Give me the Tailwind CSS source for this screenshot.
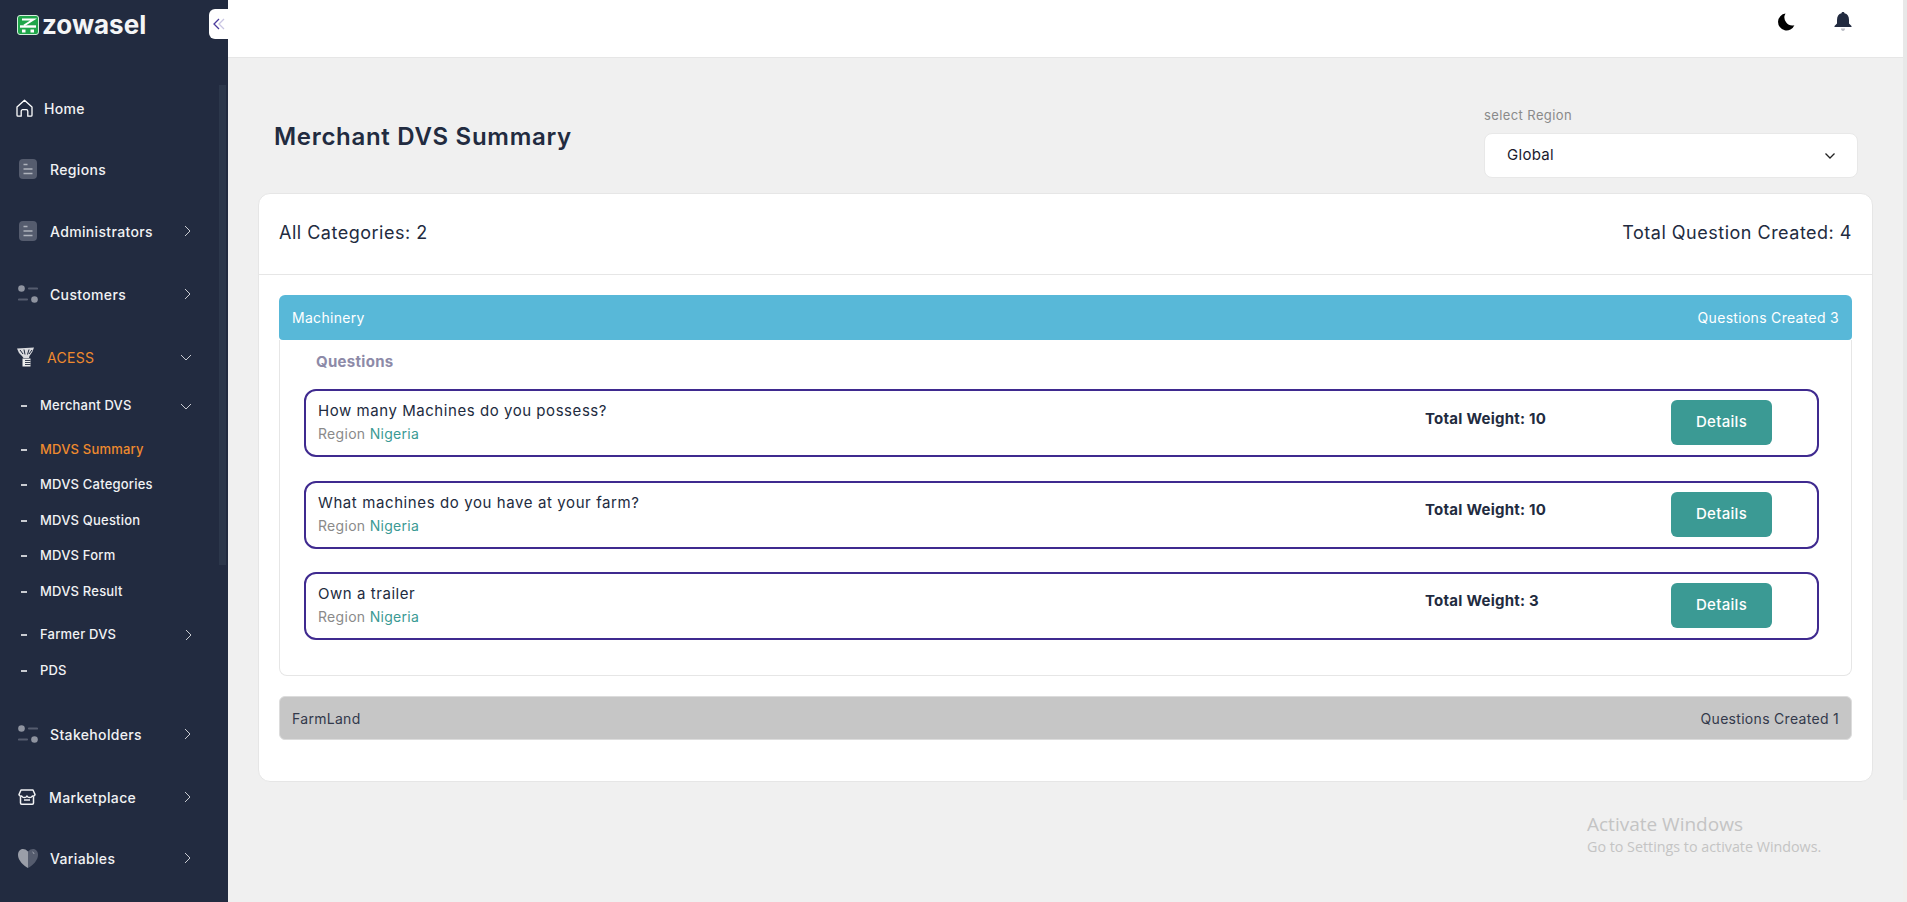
<!DOCTYPE html>
<html lang="en">

<head>
    <meta charset="UTF-8">
    <meta name="viewport" content="width=device-width, initial-scale=1.0">
    <title>Merchant DVS Summary</title>
    <script src="https://cdn.jsdelivr.net/npm/@tailwindcss/browser@4"></script>
</head>

<body class="h-[902px] overflow-hidden flex bg-[#f0f0f0] text-[#222b40] font-[Inter,sans-serif]">

    <!-- Sidebar -->
    <aside class="relative w-[228px] h-[902px] shrink-0 bg-[#222b40] text-[#f1f2f4] overflow-hidden">
        <div class="flex items-center h-[50px] pl-[17px]">
            <svg class="w-[22px] h-[20px]" viewBox="0 0 22 20">
                <rect x=".5" y=".5" width="21" height="19" rx="2.500" fill="#1fa64a" stroke="#d5eedd" />
                <path d="M5 4.500h11.500L7 10.500" fill="none" stroke="#fff" stroke-width="2" />
                <path d="M3 11.500h16" stroke="#fff" stroke-width="2.400" />
                <rect x="5" y="14.500" width="3.500" height="3" fill="#fff" />
                <rect x="13.500" y="14.500" width="3.500" height="3" fill="#fff" />
            </svg>
            <span class="ml-[3px] text-[26px] leading-none font-bold text-[#f4f5f6]">zowasel</span>
        </div>

        <button class="absolute left-[209px] top-[9px] w-[19px] h-[30px] bg-white rounded-l-md flex items-center justify-center">
            <svg class="w-[14px] h-[14px]" viewBox="0 0 14 14" fill="none" stroke-width="1.300">
                <path d="M7 2 2 7l5 5" stroke="#4a3a9c" />
                <path d="M12 2 7 7l5 5" stroke="#c9c5e3" />
            </svg>
        </button>

        <div class="absolute left-[219px] top-[85px] w-[7px] h-[480px] bg-[#2c374b]"></div>

        <nav class="relative pt-[42px] text-[14px] font-medium">
            <a class="flex items-center h-8 pl-[16px]">
                <svg class="w-[17px] h-[18px] shrink-0" viewBox="0 0 17 18" fill="none" stroke="#fff" stroke-width="1.300" stroke-linejoin="round">
                    <path d="M1 8 8.500 1.200 16 8v8.200a1 1 0 0 1-1 1h-3.200v-5a1.500 1.500 0 0 0-1.500-1.500H6.700a1.500 1.500 0 0 0-1.500 1.500v5H2a1 1 0 0 1-1-1z" />
                </svg>
                <span class="ml-[11px] tracking-[0.3px]">Home</span>
            </a>

            <a class="flex items-center h-8 pl-[19px] mt-[29px]">
                <svg class="w-[18px] h-[20px] shrink-0" viewBox="0 0 18 20">
                    <rect width="18" height="20" rx="4" fill="#555c6e" />
                    <path d="M4.500 5.500h4M4.500 10h9M4.500 14.500h9" stroke="#aeb2bc" stroke-width="1.300" />
                </svg>
                <span class="ml-[13px] tracking-[0.35px]">Regions</span>
            </a>

            <a class="flex items-center h-8 pl-[19px] mt-[30px]">
                <svg class="w-[18px] h-[20px] shrink-0" viewBox="0 0 18 20">
                    <rect width="18" height="20" rx="4" fill="#555c6e" />
                    <path d="M4.500 5.500h4M4.500 10h9M4.500 14.500h9" stroke="#aeb2bc" stroke-width="1.300" />
                </svg>
                <span class="ml-[13px] tracking-[0.35px]">Administrators</span>
                <svg class="absolute left-[184px] w-[7px] h-[12px]" viewBox="0 0 7 12" fill="none" stroke="#c9cbd1" stroke-width="1"><path d="m1 1 5 5-5 5" /></svg>
            </a>

            <a class="flex items-center h-8 pl-[18px] mt-[31px]">
                <svg class="w-[20px] h-[18px] shrink-0" viewBox="0 0 20 18">
                    <circle cx="3.500" cy="3.500" r="3.300" fill="#8f94a0" />
                    <circle cx="16.500" cy="14.500" r="3.300" fill="#8f94a0" />
                    <path d="M11 3.500h8M1 14.500h8" stroke="#555c6e" stroke-width="2.200" stroke-linecap="round" />
                </svg>
                <span class="ml-[12px] tracking-[0.35px]">Customers</span>
                <svg class="absolute left-[184px] w-[7px] h-[12px]" viewBox="0 0 7 12" fill="none" stroke="#c9cbd1" stroke-width="1"><path d="m1 1 5 5-5 5" /></svg>
            </a>

            <a class="flex items-center h-8 pl-[16px] mt-[31px]">
                <svg class="w-[19px] h-[20px] shrink-0" viewBox="0 0 19 20">
                    <path d="M1 1.500 18 .500l-1.500 4-3 4.500-.500 2H7.500L6 9 3 6z" fill="#d9dade" />
                    <path d="M4 3l3 4M8 2.500l1 5M13 2.500l-1.500 5M16 3l-3 4" stroke="#222b40" stroke-width="1" fill="none" />
                    <path d="M6.500 11.500h8v8h-8z" fill="#eceded" />
                    <path d="M9 13.500h5.500M9 15.500h5.500M9 17.500h5.500" stroke="#222b40" stroke-width=".9" />
                </svg>
                <span class="ml-[12px] font-normal tracking-[0.3px] text-[#ef8a2e]">ACESS</span>
                <svg class="absolute left-[180px] w-[12px] h-[7px]" viewBox="0 0 12 7" fill="none" stroke="#c9cbd1" stroke-width="1"><path d="m1 1 5 5 5-5" /></svg>
            </a>

            <div class="text-[13px]">
                <a class="flex items-center h-8 pl-[21px] mt-[17px]">
                    <span class="w-[6px] h-[2px] bg-[#c9cbd1]"></span>
                    <span class="ml-[13px] tracking-[0.2px]">Merchant DVS</span>
                    <svg class="absolute left-[180px] w-[12px] h-[7px]" viewBox="0 0 12 7" fill="none" stroke="#c9cbd1" stroke-width="1"><path d="m1 1 5 5 5-5" /></svg>
                </a>
                <a class="flex items-center h-8 pl-[21px] mt-[12px]">
                    <span class="w-[6px] h-[2px] bg-[#c9cbd1]"></span>
                    <span class="ml-[13px] tracking-[0.2px] text-[#ef8a2e]">MDVS Summary</span>
                </a>
                <a class="flex items-center h-8 pl-[21px] mt-[3px]">
                    <span class="w-[6px] h-[2px] bg-[#c9cbd1]"></span>
                    <span class="ml-[13px] tracking-[0.2px]">MDVS Categories</span>
                </a>
                <a class="flex items-center h-8 pl-[21px] mt-[4px]">
                    <span class="w-[6px] h-[2px] bg-[#c9cbd1]"></span>
                    <span class="ml-[13px] tracking-[0.2px]">MDVS Question</span>
                </a>
                <a class="flex items-center h-8 pl-[21px] mt-[3px]">
                    <span class="w-[6px] h-[2px] bg-[#c9cbd1]"></span>
                    <span class="ml-[13px] tracking-[0.2px]">MDVS Form</span>
                </a>
                <a class="flex items-center h-8 pl-[21px] mt-[4px]">
                    <span class="w-[6px] h-[2px] bg-[#c9cbd1]"></span>
                    <span class="ml-[13px] tracking-[0.2px]">MDVS Result</span>
                </a>
                <a class="flex items-center h-8 pl-[21px] mt-[11px]">
                    <span class="w-[6px] h-[2px] bg-[#c9cbd1]"></span>
                    <span class="ml-[13px] tracking-[0.2px]">Farmer DVS</span>
                    <svg class="absolute left-[185px] w-[7px] h-[12px]" viewBox="0 0 7 12" fill="none" stroke="#c9cbd1" stroke-width="1"><path d="m1 1 5 5-5 5" /></svg>
                </a>
                <a class="flex items-center h-8 pl-[21px] mt-[4px]">
                    <span class="w-[6px] h-[2px] bg-[#c9cbd1]"></span>
                    <span class="ml-[13px] tracking-[0.2px]">PDS</span>
                </a>
            </div>

            <a class="flex items-center h-8 pl-[18px] mt-[31px]">
                <svg class="w-[20px] h-[18px] shrink-0" viewBox="0 0 20 18">
                    <circle cx="3.500" cy="3.500" r="3.300" fill="#8f94a0" />
                    <circle cx="16.500" cy="14.500" r="3.300" fill="#8f94a0" />
                    <path d="M11 3.500h8M1 14.500h8" stroke="#555c6e" stroke-width="2.200" stroke-linecap="round" />
                </svg>
                <span class="ml-[12px] tracking-[0.35px]">Stakeholders</span>
                <svg class="absolute left-[184px] w-[7px] h-[12px]" viewBox="0 0 7 12" fill="none" stroke="#c9cbd1" stroke-width="1"><path d="m1 1 5 5-5 5" /></svg>
            </a>

            <a class="flex items-center h-8 pl-[18px] mt-[31px]">
                <svg class="w-[18px] h-[16px] shrink-0" viewBox="0 0 18 16" fill="none" stroke="#f1f2f4" stroke-width="1.500" stroke-linejoin="round">
                    <path d="M3 1h12l2 4.500a2 2 0 0 1-2.700 1.500 3 3 0 0 1-5.300 0 3 3 0 0 1-5.300 0A2 2 0 0 1 1 5.500z" />
                    <path d="M2.500 7.500V14a1.200 1.200 0 0 0 1.200 1.200h10.600a1.200 1.200 0 0 0 1.200-1.200V7.500" />
                    <path d="M6 11h6" />
                </svg>
                <span class="ml-[13px] tracking-[0.35px]">Marketplace</span>
                <svg class="absolute left-[184px] w-[7px] h-[12px]" viewBox="0 0 7 12" fill="none" stroke="#c9cbd1" stroke-width="1"><path d="m1 1 5 5-5 5" /></svg>
            </a>

            <a class="flex items-center h-8 pl-[18px] mt-[29px]">
                <svg class="w-[20px] h-[19px] shrink-0" viewBox="0 0 20 19">
                    <path d="M10 2.500C8.500.800 6.500 0 5 0 2 0 0 2.500 0 6c0 5.500 5.500 10.500 10 13z" fill="#9a9ea8" />
                    <path d="M10 2.500C11.500.800 13.500 0 15 0c3 0 5 2.500 5 6 0 5.500-5.500 10.500-10 13z" fill="#555c6e" />
                    <path d="M14.500 3c.8.300 1.300.900 1.500 1.800" stroke="#aeb2bc" fill="none" />
                </svg>
                <span class="ml-[12px] tracking-[0.35px]">Variables</span>
                <svg class="absolute left-[184px] w-[7px] h-[12px]" viewBox="0 0 7 12" fill="none" stroke="#c9cbd1" stroke-width="1"><path d="m1 1 5 5-5 5" /></svg>
            </a>
        </nav>
    </aside>

    <!-- Main -->
    <main class="relative w-[1675px] shrink-0 flex flex-col">
        <header class="h-[58px] shrink-0 bg-white border-b border-[#e6e6e6] flex justify-end items-start pt-[12px] pr-[51px] gap-[39px]">
            <svg class="w-[18px] h-[18px] mt-[1px]" viewBox="0 0 18 18">
                <path d="M8.500.500A8.500 8.500 0 1 0 17.400 12.200 8 8 0 0 1 8.500.500z" fill="#000" />
            </svg>
            <svg class="w-[18px] h-[20px]" viewBox="0 0 18 20">
                <path d="M9 0c.900 0 1.400.500 1.500 1.300C13.500 2 15 4.500 15 8v3.500l2.500 2.500v1H.500v-1L3 11.500V8c0-3.500 1.500-6 4.500-6.700C7.600.500 8.100 0 9 0z" fill="#222b40" />
                <path d="M7 16.500h4c0 1.500-.900 2.500-2 2.500s-2-1-2-2.500z" fill="#b9bcc4" />
            </svg>
        </header>

        <div class="px-[30px]">
            <div class="flex justify-between items-start h-[135px] pt-[47px]">
                <h1 class="ml-[16px] mt-[14px] text-[24px] leading-[36px] font-semibold tracking-[0.7px]">Merchant DVS Summary</h1>
                <div class="w-[374px] mr-[15px]">
                    <label class="block h-[20px] text-[13px] leading-[20px] tracking-[0.4px] text-[#8a8a8a]">select Region</label>
                    <div class="mt-[8px] h-[45px] bg-white border border-[#e8e8e8] rounded-lg flex items-center justify-between pl-[22px] pr-[22px] text-[15px] text-[#1a1a2e] tracking-[0.3px]">
                        Global
                        <svg class="w-[10px] h-[6px]" viewBox="0 0 10 6" fill="none" stroke="#222" stroke-width="1.300"><path d="m.5.500 4.500 4.500 4.500-4.500" /></svg>
                    </div>
                </div>
            </div>

            <section class="h-[589px] bg-white border border-[#e6e6e6] rounded-xl">
                <div class="h-[81px] pb-[3px] border-b border-[#e6e6e6] flex items-center justify-between px-[20px] text-[18px] tracking-[0.5px]">
                    <span>All Categories: 2</span>
                    <span>Total Question Created: 4</span>
                </div>

                <div class="px-[20px] pt-[20px]">
                    <div class="h-[45px] pb-[1px] bg-[#58b8d8] rounded-t-md rounded-b-sm flex items-center justify-between px-[13px] text-[14px] text-white tracking-[0.3px]">
                        <span>Machinery</span>
                        <span>Questions Created 3</span>
                    </div>

                    <div class="h-[336px] border border-t-0 border-[#e6e6e6] rounded-b-lg">
                        <h3 class="pl-[36px] pt-[11px] h-[49px] text-[15px] leading-[22px] font-bold tracking-[0.3px] text-[#8d8aa8]">Questions</h3>

                        <div class="ml-[24px] w-[1515px] flex flex-col gap-[23.500px]">
                            <div class="h-[68px] border-2 border-[#3f2a8f] rounded-xl flex items-center pl-[12px]">
                                <div class="w-[1107px]">
                                    <p class="text-[15px] leading-[24px] tracking-[0.55px] -mt-[2px]">How many Machines do you possess?</p>
                                    <p class="text-[14px] leading-[22px] tracking-[0.3px] text-[#8a8a8a]">Region <span class="text-[#3b9a94]">Nigeria</span></p>
                                </div>
                                <div class="w-[246px] -mt-[8px] text-[15px] font-bold tracking-[0.25px]">Total Weight: 10</div>
                                <button class="w-[101px] h-[45px] mb-[1px] bg-[#3b9a94] rounded-md text-white text-[15px] font-medium tracking-[0.3px]">Details</button>
                            </div>
                            <div class="h-[68px] border-2 border-[#3f2a8f] rounded-xl flex items-center pl-[12px]">
                                <div class="w-[1107px]">
                                    <p class="text-[15px] leading-[24px] tracking-[0.6px] -mt-[2px]">What machines do you have at your farm?</p>
                                    <p class="text-[14px] leading-[22px] tracking-[0.3px] text-[#8a8a8a]">Region <span class="text-[#3b9a94]">Nigeria</span></p>
                                </div>
                                <div class="w-[246px] -mt-[9px] text-[15px] font-bold tracking-[0.25px]">Total Weight: 10</div>
                                <button class="w-[101px] h-[45px] mb-[1px] bg-[#3b9a94] rounded-md text-white text-[15px] font-medium tracking-[0.3px]">Details</button>
                            </div>
                            <div class="h-[68px] border-2 border-[#3f2a8f] rounded-xl flex items-center pl-[12px]">
                                <div class="w-[1107px]">
                                    <p class="text-[15px] leading-[24px] tracking-[0.55px] -mt-[3px]">Own a trailer</p>
                                    <p class="text-[14px] leading-[22px] tracking-[0.3px] text-[#8a8a8a]">Region <span class="text-[#3b9a94]">Nigeria</span></p>
                                </div>
                                <div class="w-[246px] -mt-[9px] text-[15px] font-bold tracking-[0.25px]">Total Weight: 3</div>
                                <button class="w-[101px] h-[45px] mb-[1px] bg-[#3b9a94] rounded-md text-white text-[15px] font-medium tracking-[0.3px]">Details</button>
                            </div>
                        </div>
                    </div>

                    <div class="mt-[20px] h-[44px] bg-[#c6c6c6] border border-[#dcdcdc] rounded-md flex items-center justify-between px-[12px] text-[14px] text-[#33394b] tracking-[0.3px]">
                        <span>FarmLand</span>
                        <span>Questions Created 1</span>
                    </div>
                </div>
            </section>
        </div>

        <div class="absolute left-[1359px] top-[811px] font-['Open_Sans',sans-serif] text-[#c4c4c4]">
            <p class="text-[19px] leading-[26px]">Activate Windows</p>
            <p class="text-[14.300px] leading-[20px]">Go to Settings to activate Windows.</p>
        </div>
    </main>

    <div class="w-[4px] h-[902px] shrink-0 bg-[#f1efed]">
        <div class="h-[800px] bg-[#e8e8e8]"></div>
    </div>
</body>

</html>
